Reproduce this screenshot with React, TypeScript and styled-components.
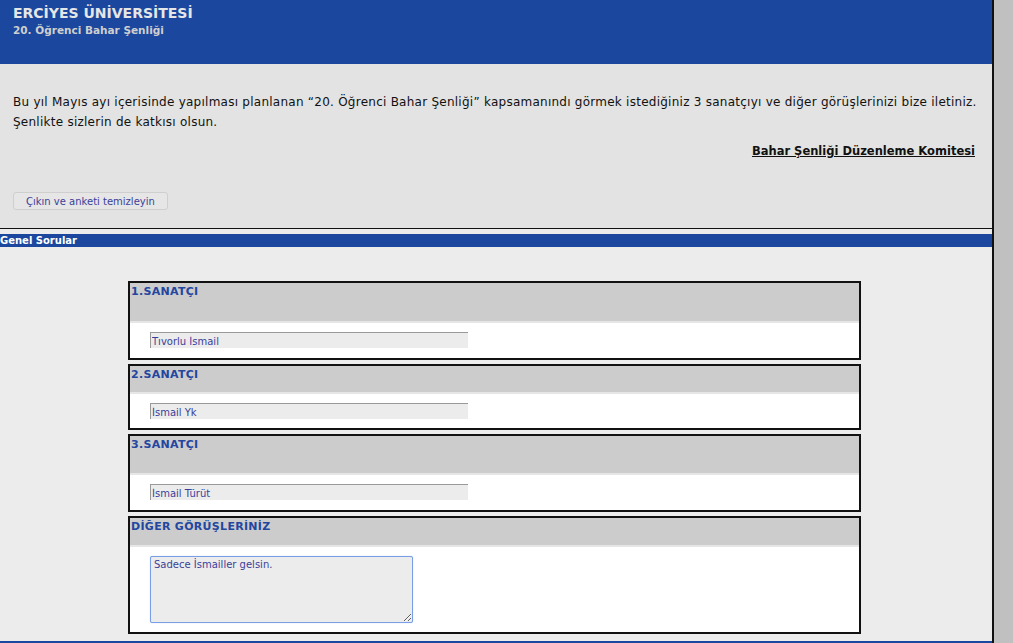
import React from "react";
import styled, { createGlobalStyle } from "styled-components";

const GlobalStyle = createGlobalStyle`
* {
  box-sizing: border-box;
}
body {
  margin: 0;
  padding: 0;
  background: #c0c0c0;
  font-family: "DejaVu Sans", "Liberation Sans", sans-serif;
  overflow: hidden;
}
`;

const Page = styled.div`
  display: flex;
  width: 1013px;
  height: 643px;
  overflow: hidden;
`;

const Main = styled.div`
  width: 994px;
  border-right: 2px solid #111;
  display: flex;
  flex-direction: column;
  background: #ececec;
`;

const SideGutter = styled.div`
  flex: 1;
  background: #c0c0c0;
`;

const Header = styled.div`
  height: 64px;
  background: #1b479e;
  padding: 5px 13px;
`;

const Title = styled.div`
  font-family: "DejaVu Sans", sans-serif;
  font-weight: bold;
  font-size: 14px;
  color: #e6e6e6;
  line-height: 17px;
`;

const Subtitle = styled.div`
  font-family: "DejaVu Sans", sans-serif;
  font-weight: bold;
  font-size: 10.5px;
  color: #cfcfcf;
  line-height: 16px;
`;

const Intro = styled.div`
  background: #e3e3e3;
  padding: 28px 17px 0 13px;
  height: 165px;
  border-bottom: 1px solid #111;
  display: flex;
  flex-direction: column;
`;

const IntroText = styled.p`
  margin: 0;
  font-size: 12px;
  line-height: 20px;
  color: #111;
`;

const IntroLine = styled.span`
  display: block;
  white-space: nowrap;
  letter-spacing: 0.25px;
`;

const Committee = styled.div`
  margin-top: 12px;
  text-align: right;
  font-size: 11.5px;
  font-weight: bold;
  color: #111;
  text-decoration: underline;
`;

const ClearButton = styled.button`
  align-self: flex-start;
  margin-top: 34px;
  height: 18px;
  padding: 0 12px;
  font-family: "DejaVu Sans", sans-serif;
  font-size: 10px;
  color: #3b3f9a;
  background: #e6e6e6;
  border: 1px solid #cfcfcf;
  border-radius: 3px;
`;

const SectionBar = styled.div`
  margin-top: 5px;
  height: 13px;
  background: #1b479e;
  color: #fff;
  font-weight: bold;
  font-size: 10px;
  line-height: 13px;
  white-space: nowrap;
`;

const Content = styled.div`
  flex: 1;
  padding: 34px 0 0 128px;
  display: flex;
  flex-direction: column;
  gap: 4px;
  border-bottom: 2px solid #1b479e;
`;

const QuestionBox = styled.div`
  width: 733px;
  border: 2px solid #111;
  background: #fff;
  display: flex;
  flex-direction: column;
`;

const QuestionHead = styled.div<{ $h: number }>`
  height: ${({ $h }) => $h}px;
  background: #cccccc;
  border-bottom: 2px solid #e6e6e6;
  padding: 2px 0 0 1px;
  font-weight: bold;
  font-size: 11px;
  color: #2346a0;
  letter-spacing: 0.3px;
`;

const QuestionBody = styled.div<{ $h: number }>`
  height: ${({ $h }) => $h}px;
  padding: 9px 0 0 20px;
`;

const TextInput = styled.input`
  display: block;
  width: 318px;
  height: 16px;
  padding: 1px 1px 0;
  border: none;
  border-top: 1px solid #999;
  border-left: 1px solid #999;
  background: #ececec;
  font-family: "DejaVu Sans", sans-serif;
  font-size: 10px;
  color: #3a3f9a;
  outline: none;
`;

const TextArea = styled.textarea`
  display: block;
  width: 263px;
  height: 67px;
  padding: 2px 3px;
  border: 1px solid #7a9ee6;
  box-shadow: 0 0 1px #9ab6ee;
  border-radius: 2px;
  background: #ececec;
  font-family: "DejaVu Sans", sans-serif;
  font-size: 10px;
  color: #3a3f9a;
  outline: none;
  resize: both;
`;

const questions = [
  { label: "1.SANATÇI", value: "Tıvorlu İsmail", head: 40, body: 35 },
  { label: "2.SANATÇI", value: "İsmail Yk", head: 28, body: 34 },
  { label: "3.SANATÇI", value: "İsmail Türüt", head: 39, body: 35 },
];

export default function App() {
  return (
    <Page>
      <GlobalStyle />
      <Main>
        <Header>
          <Title>ERCİYES ÜNİVERSİTESİ</Title>
          <Subtitle>20. Öğrenci Bahar Şenliği</Subtitle>
        </Header>
        <Intro>
          <IntroText>
            <IntroLine>
              Bu yıl Mayıs ayı içerisinde yapılması planlanan “20. Öğrenci
              Bahar Şenliği” kapsamanındı görmek istediğiniz 3 sanatçıyı ve
              diğer görüşlerinizi bize iletiniz.
            </IntroLine>
            <IntroLine>Şenlikte sizlerin de katkısı olsun.</IntroLine>
          </IntroText>
          <Committee>Bahar Şenliği Düzenleme Komitesi</Committee>
          <ClearButton>Çıkın ve anketi temizleyin</ClearButton>
        </Intro>
        <SectionBar>Genel Sorular</SectionBar>
        <Content>
          {questions.map((q) => (
            <QuestionBox key={q.label}>
              <QuestionHead $h={q.head}>{q.label}</QuestionHead>
              <QuestionBody $h={q.body}>
                <TextInput defaultValue={q.value} />
              </QuestionBody>
            </QuestionBox>
          ))}
          <QuestionBox>
            <QuestionHead $h={29}>DİĞER GÖRÜŞLERİNİZ</QuestionHead>
            <QuestionBody $h={85}>
              <TextArea defaultValue="Sadece İsmailler gelsin." autoFocus />
            </QuestionBody>
          </QuestionBox>
        </Content>
      </Main>
      <SideGutter />
    </Page>
  );
}
